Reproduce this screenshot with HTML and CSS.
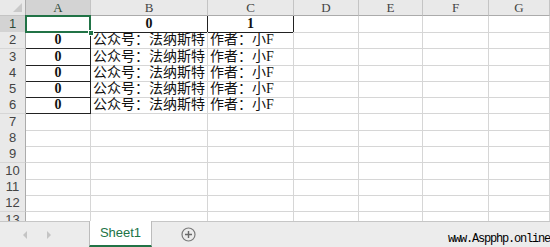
FILE: index.html
```html
<!DOCTYPE html>
<html lang="zh-CN">
<head>
    <meta charset="UTF-8">
    <title>Sheet1</title>
    <link rel="stylesheet" href="styles.css">
</head>
<body>
    <div class="book">
        <div class="sheet">
            <div class="row head">
                <div class="corner"></div>
                <div class="col sel">A</div>
                <div class="col">B</div>
                <div class="col">C</div>
                <div class="col">D</div>
                <div class="col">E</div>
                <div class="col">F</div>
                <div class="col">G</div>
            </div>

            <div class="row">
                <div class="num sel">1</div>
                <div class="cell active"></div>
                <div class="cell th">0</div>
                <div class="cell th">1</div>
                <div class="cell"></div><div class="cell"></div><div class="cell"></div><div class="cell"></div>
            </div>
            <div class="row">
                <div class="num">2</div>
                <div class="cell idx">0</div>
                <div class="cell">公众号：法纳斯特</div>
                <div class="cell">作者：小F</div>
                <div class="cell"></div><div class="cell"></div><div class="cell"></div><div class="cell"></div>
            </div>
            <div class="row">
                <div class="num">3</div>
                <div class="cell idx">0</div>
                <div class="cell">公众号：法纳斯特</div>
                <div class="cell">作者：小F</div>
                <div class="cell"></div><div class="cell"></div><div class="cell"></div><div class="cell"></div>
            </div>
            <div class="row">
                <div class="num">4</div>
                <div class="cell idx">0</div>
                <div class="cell">公众号：法纳斯特</div>
                <div class="cell">作者：小F</div>
                <div class="cell"></div><div class="cell"></div><div class="cell"></div><div class="cell"></div>
            </div>
            <div class="row">
                <div class="num">5</div>
                <div class="cell idx">0</div>
                <div class="cell">公众号：法纳斯特</div>
                <div class="cell">作者：小F</div>
                <div class="cell"></div><div class="cell"></div><div class="cell"></div><div class="cell"></div>
            </div>
            <div class="row">
                <div class="num">6</div>
                <div class="cell idx">0</div>
                <div class="cell">公众号：法纳斯特</div>
                <div class="cell">作者：小F</div>
                <div class="cell"></div><div class="cell"></div><div class="cell"></div><div class="cell"></div>
            </div>
            <div class="row">
                <div class="num">7</div>
                <div class="cell"></div><div class="cell"></div><div class="cell"></div><div class="cell"></div><div class="cell"></div><div class="cell"></div><div class="cell"></div>
            </div>
            <div class="row">
                <div class="num">8</div>
                <div class="cell"></div><div class="cell"></div><div class="cell"></div><div class="cell"></div><div class="cell"></div><div class="cell"></div><div class="cell"></div>
            </div>
            <div class="row">
                <div class="num">9</div>
                <div class="cell"></div><div class="cell"></div><div class="cell"></div><div class="cell"></div><div class="cell"></div><div class="cell"></div><div class="cell"></div>
            </div>
            <div class="row">
                <div class="num">10</div>
                <div class="cell"></div><div class="cell"></div><div class="cell"></div><div class="cell"></div><div class="cell"></div><div class="cell"></div><div class="cell"></div>
            </div>
            <div class="row">
                <div class="num">11</div>
                <div class="cell"></div><div class="cell"></div><div class="cell"></div><div class="cell"></div><div class="cell"></div><div class="cell"></div><div class="cell"></div>
            </div>
            <div class="row">
                <div class="num">12</div>
                <div class="cell"></div><div class="cell"></div><div class="cell"></div><div class="cell"></div><div class="cell"></div><div class="cell"></div><div class="cell"></div>
            </div>
            <div class="row">
                <div class="num">13</div>
                <div class="cell"></div><div class="cell"></div><div class="cell"></div><div class="cell"></div><div class="cell"></div><div class="cell"></div><div class="cell"></div>
            </div>
        </div>

        <div class="tabs">
            <div class="nav">
                <span class="arrow left"></span>
                <span class="arrow right"></span>
            </div>
            <div class="tab">Sheet1</div>
            <div class="add">
                <svg width="15" height="15" viewBox="0 0 15 15">
                    <circle cx="7.5" cy="7.5" r="6.5" fill="none" stroke="#7a7a7a" stroke-width="1.2"/>
                    <path d="M7.5 4v7M4 7.5h7" stroke="#6a6a6a" stroke-width="1.4"/>
                </svg>
            </div>
        </div>

        <div class="watermark">www.Aspphp.online</div>
    </div>
</body>
</html>
```

FILE: styles.css
```css
body {
    margin: 0;
    background: #fff;
    overflow: hidden;
}

.book {
    position: relative;
    width: 550px;
    height: 247px;
    overflow: hidden;
}

.sheet {
    height: 221px;
    overflow: hidden;
}

.row {
    display: grid;
    grid-template-columns: 26px 65px 117px 86px 65px 64px 66px 1fr;
    height: 16.3px;
}

.row.head {
    height: 16px;
}

/* header cells */
.corner,
.col,
.num {
    box-sizing: border-box;
    background: #e9e9e9;
    color: #444;
    border-right: 1px solid #c4c4c4;
    border-bottom: 1px solid #c4c4c4;
    text-align: center;
}

.corner {
    position: relative;
    border-right-color: #ababab;
}

.corner::after {
    content: "";
    position: absolute;
    right: 3px;
    bottom: 3px;
    border-left: 9px solid transparent;
    border-bottom: 9px solid #c9c9c9;
}

.col {
    font: 13px/15px "Liberation Serif", serif;
    border-bottom-color: #ababab;
}

.num {
    font: 13px/16px "Liberation Sans", sans-serif;
    border-right-color: #ababab;
    border-bottom-color: #d6d6d6;
}

.col.sel,
.num.sel {
    background: #d3d3d3;
    color: #2e4a38;
}

/* grid cells */
.cell {
    box-sizing: border-box;
    border-right: 1px solid #d6d6d6;
    border-bottom: 1px solid #d6d6d6;
    padding: 0 2px;
    font: 14px/16px "Liberation Serif", "Noto Sans CJK SC", serif;
    color: #111;
    white-space: nowrap;
    overflow: hidden;
}

.cell.th,
.cell.idx {
    font-weight: bold;
    text-align: center;
    border-right-color: #222;
    border-bottom-color: #222;
}

.cell.active {
    position: relative;
    overflow: visible;
    z-index: 2;
}

.cell.active::after {
    content: "";
    position: absolute;
    left: -1px;
    top: -1px;
    right: -1px;
    bottom: -1px;
    border: 2px solid #217346;
}

.cell.active::before {
    content: "";
    position: absolute;
    right: -4px;
    bottom: -4px;
    width: 4px;
    height: 4px;
    background: #217346;
    border: 1px solid #fff;
    z-index: 1;
}

/* sheet tabs */
.tabs {
    display: flex;
    align-items: stretch;
    height: 26px;
    background: #ececec;
    border-top: 1px solid #c6c6c6;
    box-sizing: border-box;
}

.nav {
    display: flex;
    align-items: center;
    gap: 20px;
    width: 89px;
    padding-left: 23px;
    box-sizing: border-box;
}

.arrow {
    width: 0;
    height: 0;
    border-top: 4px solid transparent;
    border-bottom: 4px solid transparent;
}

.arrow.left {
    border-right: 4px solid #c4c4c4;
}

.arrow.right {
    border-left: 4px solid #c4c4c4;
}

.tab {
    width: 63px;
    margin-top: -1px;
    background: #fff;
    border-left: 1px solid #bcbcbc;
    border-right: 1px solid #bcbcbc;
    border-bottom: 2px solid #217346;
    box-sizing: border-box;
    font: 13px/24px "Liberation Sans", sans-serif;
    color: #217346;
    text-align: center;
}

.add {
    display: flex;
    align-items: center;
    margin-left: 29px;
}

.add svg {
    display: block;
}

.watermark {
    position: absolute;
    right: 0;
    bottom: 1px;
    font: 12px/13px "Liberation Mono", monospace;
    letter-spacing: -1.2px;
    color: #000;
}
```
